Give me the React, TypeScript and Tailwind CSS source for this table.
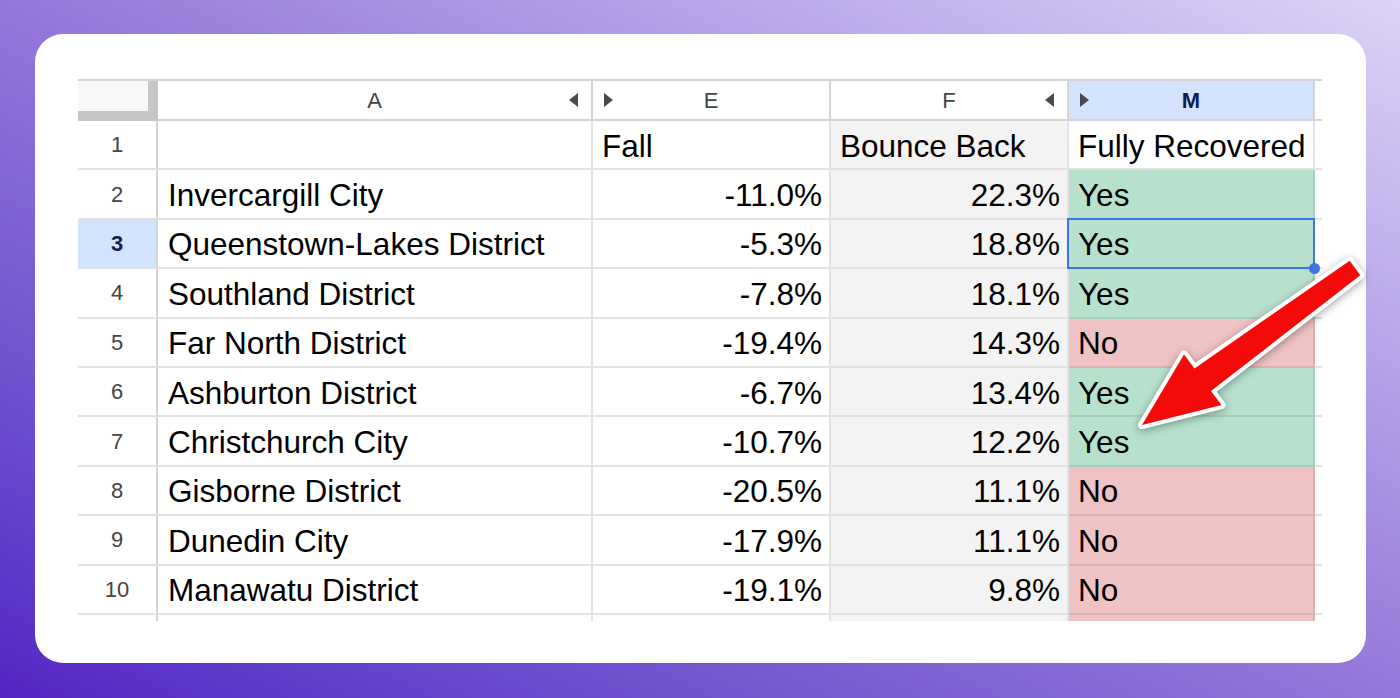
import React from "react";

type Row = { n: number; a: string; e: string; f: string; m: string };

const rows: Row[] = [
  { n: 2, a: "Invercargill City", e: "-11.0%", f: "22.3%", m: "Yes" },
  { n: 3, a: "Queenstown-Lakes District", e: "-5.3%", f: "18.8%", m: "Yes" },
  { n: 4, a: "Southland District", e: "-7.8%", f: "18.1%", m: "Yes" },
  { n: 5, a: "Far North District", e: "-19.4%", f: "14.3%", m: "No" },
  { n: 6, a: "Ashburton District", e: "-6.7%", f: "13.4%", m: "Yes" },
  { n: 7, a: "Christchurch City", e: "-10.7%", f: "12.2%", m: "Yes" },
  { n: 8, a: "Gisborne District", e: "-20.5%", f: "11.1%", m: "No" },
  { n: 9, a: "Dunedin City", e: "-17.9%", f: "11.1%", m: "No" },
  { n: 10, a: "Manawatu District", e: "-19.1%", f: "9.8%", m: "No" },
];

const LeftTri = () => (
  <svg width="9" height="14" viewBox="0 0 9 14" className="shrink-0">
    <path d="M9 0 L0 7 L9 14 Z" fill="#4a4a4a" />
  </svg>
);
const RightTri = () => (
  <svg width="9" height="14" viewBox="0 0 9 14" className="shrink-0">
    <path d="M0 0 L9 7 L0 14 Z" fill="#4a4a4a" />
  </svg>
);

const hdr =
  "h-full border-r-2 border-b-2 border-[#d4d4d4] flex items-center text-[22px] text-[#444]";
const cell = "h-full border-r-2 border-b-2 flex items-center pt-[3px] text-[31.5px] text-black";

export default function App() {
  return (
    <div
      className="relative w-[1400px] h-[698px] overflow-hidden bg-linear-to-tr from-[#5323c5] via-[#9577da] to-[#ddd3f6] pt-[34px] pl-[35px]"
      style={{ fontFamily: '"Liberation Sans", Arial, sans-serif' }}
    >
      <div className="w-[1331px] h-[629px] bg-white rounded-[28px] pt-[45px] pl-[43px]">
        <div className="grid grid-cols-[80px_435px_238px_238px_246px_7px] grid-rows-[40px_repeat(10,49.4px)_6px] border-t-2 border-[#d4d4d4] w-[1244px]">
          {/* Header row */}
          <div className="h-full bg-[#f8f8f8] border-r-[10px] border-b-[10px] border-[#c6c6c6]" />
          <div className={`${hdr} bg-white relative justify-center`}>
            <span>A</span>
            <div className="absolute right-[13px] top-[12px]">
              <LeftTri />
            </div>
          </div>
          <div className={`${hdr} bg-white relative justify-center`}>
            <div className="absolute left-[11px] top-[12px]">
              <RightTri />
            </div>
            <span>E</span>
          </div>
          <div className={`${hdr} bg-white relative justify-center`}>
            <span>F</span>
            <div className="absolute right-[13px] top-[12px]">
              <LeftTri />
            </div>
          </div>
          <div className={`${hdr} bg-[#d3e3fd] relative justify-center`}>
            <div className="absolute left-[11px] top-[12px]">
              <RightTri />
            </div>
            <span className="font-bold text-[#0b1f4f]">M</span>
          </div>
          <div className="h-full border-b-2 border-[#d4d4d4]" />

          {/* Row 1 */}
          <div className="h-full border-r-2 border-b-2 border-[#d4d4d4] border-b-[#e2e2e2] flex items-center justify-center text-[22px] text-[#444] bg-white">
            1
          </div>
          <div className={`${cell} border-[#e2e2e2] bg-white`} />
          <div className={`${cell} border-[#e2e2e2] bg-white pl-[9px]`}>Fall</div>
          <div className={`${cell} border-[#e2e2e2] bg-[#f3f3f3] pl-[9px]`}>Bounce Back</div>
          <div className={`${cell} border-[#e2e2e2] bg-white pl-[9px]`}>Fully Recovered</div>
          <div className="h-full border-b-2 border-[#e2e2e2]" />

          {rows.map((r) => {
            const sel = r.n === 3;
            const yes = r.m === "Yes";
            return (
              <React.Fragment key={r.n}>
                <div
                  className={`h-full border-r-2 border-b-2 border-[#d4d4d4] border-b-[#e2e2e2] flex items-center justify-center text-[22px] ${
                    sel ? "bg-[#d3e3fd] font-bold text-[#0b1f4f]" : "bg-white text-[#444]"
                  }`}
                >
                  {r.n}
                </div>
                <div className={`${cell} border-[#e2e2e2] bg-white pl-[10px]`}>{r.a}</div>
                <div className={`${cell} border-[#e2e2e2] bg-white justify-end pr-[7px]`}>{r.e}</div>
                <div className={`${cell} border-[#e2e2e2] bg-[#f3f3f3] justify-end pr-[7px]`}>{r.f}</div>
                <div
                  className={`${cell} relative pl-[9px] ${
                    yes ? "bg-[#b7e1cd] border-[#a6cfbb]" : "bg-[#efc3c3] border-[#dcb0b0]"
                  }`}
                >
                  {r.m}
                  {sel && (
                    <>
                      <div className="absolute z-10 left-[-2px] top-[-2px] right-[-2px] bottom-[-2px] border-2 border-[#3a76e4]" />
                      <div className="absolute z-10 right-[-7px] bottom-[-7px] w-[11px] h-[11px] rounded-full bg-[#3a76e4]" />
                    </>
                  )}
                </div>
                <div className="h-full border-b-2 border-[#e2e2e2]" />
              </React.Fragment>
            );
          })}

          {/* stub row */}
          <div className="h-full border-r-2 border-[#d4d4d4] bg-white" />
          <div className="h-full border-r-2 border-[#e2e2e2] bg-white" />
          <div className="h-full border-r-2 border-[#e2e2e2] bg-white" />
          <div className="h-full border-r-2 border-[#e2e2e2] bg-[#f3f3f3]" />
          <div className="h-full border-r-2 border-[#dcb0b0] bg-[#efc3c3]" />
          <div />
        </div>
      </div>

      {/* Red arrow annotation */}
      <svg
        className="absolute left-0 top-0 pointer-events-none"
        width="1400"
        height="698"
        viewBox="0 0 1400 698"
        style={{ filter: "drop-shadow(0 2px 4px rgba(0,0,0,0.35))" }}
      >
        <polygon
          points="1349.7,260.7 1360.3,275.3 1211,391 1221.5,405 1142,425 1184,354.5 1194.5,368.4"
          fill="#f50a0a"
          stroke="#ffffff"
          strokeWidth="8"
          strokeLinejoin="round"
          paintOrder="stroke"
        />
      </svg>
    </div>
  );
}
